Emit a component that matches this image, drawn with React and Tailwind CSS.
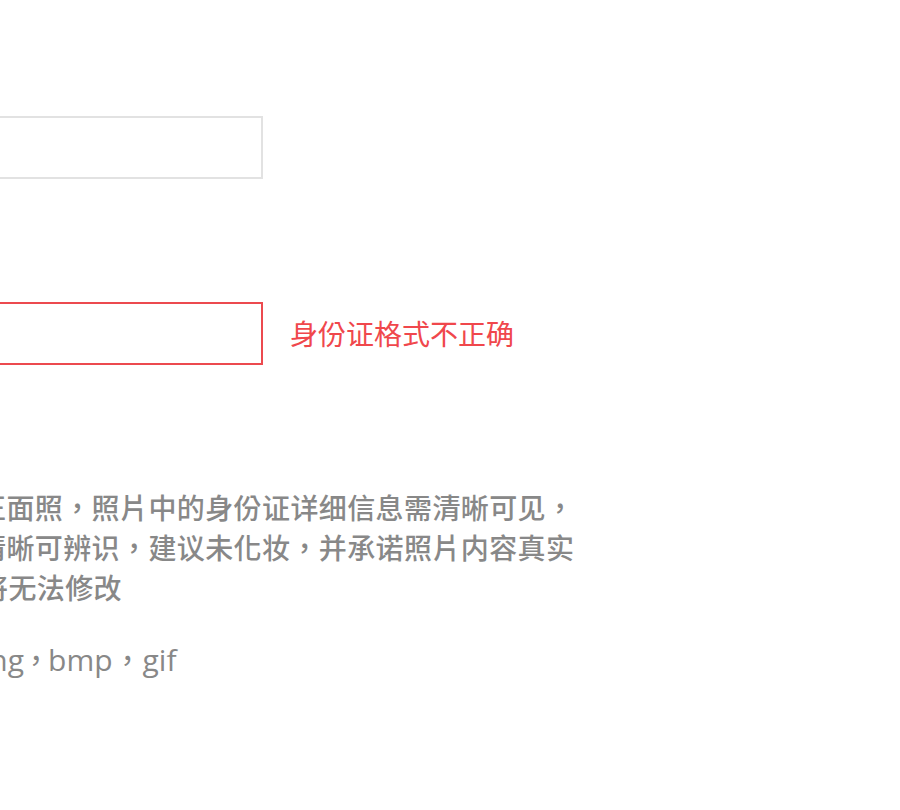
import React from 'react';

export default function App() {
    return (
        <div className="min-h-[810px] w-[900px] overflow-hidden bg-white font-['Open_Sans','Noto_Sans_CJK_TC',sans-serif]">
            {/* name field, its label sits left of the crop */}
            <div className="pt-[116px]">
                <div className="h-[63px] w-[263px] border-2 border-l-0 border-[#e2e2e2]" />
            </div>

            {/* id number field with error */}
            <div className="mt-[123px] flex items-center">
                <div className="h-[63px] w-[263px] border-2 border-l-0 border-[#ec4a4f]" />
                <span className="ml-[27px] text-[28px] leading-[40px] text-[#f0474c]">身份证格式不正确</span>
            </div>

            {/* upload tips */}
            <div className="mt-[123px] text-[28px] leading-[40px] font-medium text-[#888888] whitespace-nowrap tracking-[0.4px]">
                <p className="-ml-[22px]">正面照，照片中的身份证详细信息需清晰可见，</p>
                <p className="-ml-[22px]">清晰可辨识，建议未化妆，并承诺照片内容真实</p>
                <p className="-ml-[20px]">将无法修改</p>
                <p className="mt-[32px] -ml-[29px] text-[30px] font-normal tracking-normal">
                    png<span className="-mx-[3px]">，</span>bmp<span>，</span>gif
                </p>
            </div>
        </div>
    );
}
